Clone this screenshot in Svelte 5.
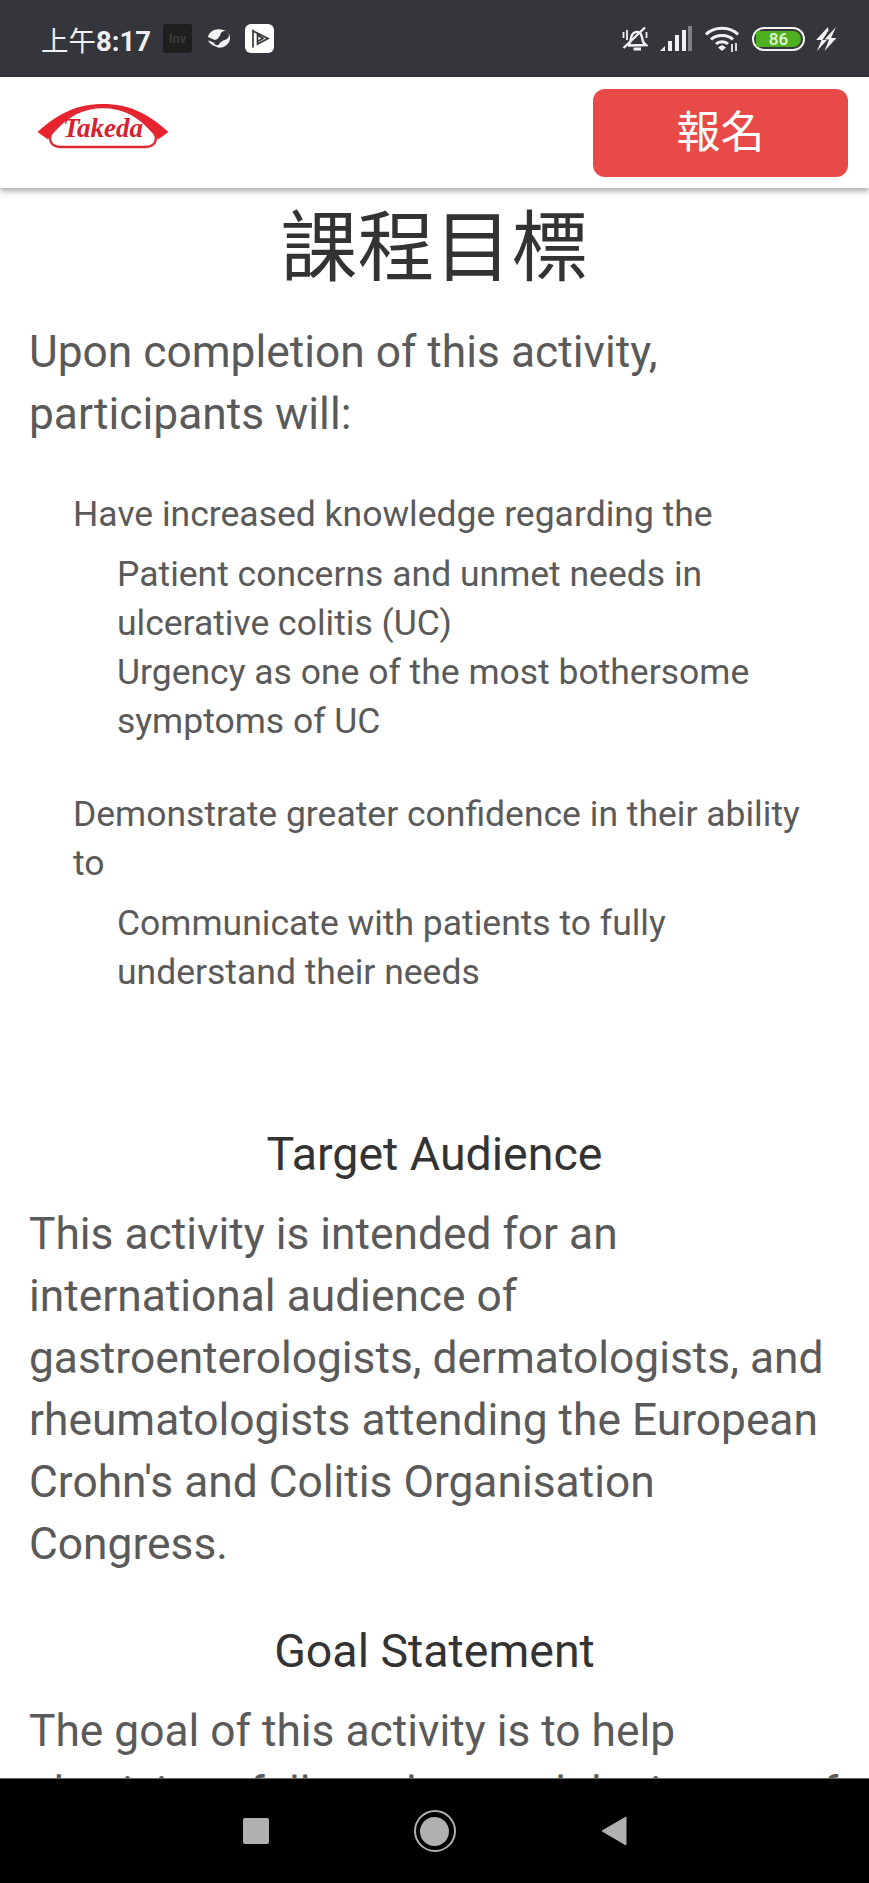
<script>
  const groups = [
    {
      lead: 'Have increased knowledge regarding the',
      items: ['Patient concerns and unmet needs in ulcerative colitis (UC)', 'Urgency as one of the most bothersome symptoms of UC']
    },
    {
      lead: 'Demonstrate greater confidence in their ability to',
      items: ['Communicate with patients to fully understand their needs']
    }
  ];
</script>

<div class="phone">
  <div class="status">
    <div class="left">
      <span class="time">上午<b>8:17</b></span>
      <span class="inv">Inv</span>
      <svg class="steam" width="24" height="21" viewBox="0 0 26 22">
        <path d="M13 1C6.500 1 2 4.600 1 9.500L8.500 12.500C9.300 12 10.200 11.700 11.200 11.800L14.300 7.500C14.500 4.500 17 2.600 19.700 3C22.300 3.400 24 5.700 23.700 8.300C23.300 11 21 12.700 18.500 12.500L14 15.600C13.600 17.400 12 18.500 10.300 18.200C8.900 18 7.900 17 7.600 15.700L1.300 13C2 16 5 18.300 9 19.500C10 20 12 21 13 21C20 21 25 16 25 10.500C25 5 20 1 13 1Z" fill="#f4f4f4"/>
        <circle cx="19" cy="7.800" r="2.800" fill="none" stroke="#35363b" stroke-width="1.200"/>
      </svg>
      <svg class="play" width="29" height="29" viewBox="0 0 29 29">
        <rect width="29" height="29" rx="6" fill="#fff"/>
        <path d="M8 5.500V23.500M8 7L23 14.500L12.500 20V11L18 14.500L12.500 17.500" fill="none" stroke="#36373b" stroke-width="1.700"/>
      </svg>
    </div>
    <div class="right">
      <svg class="bell" width="26" height="25" viewBox="0 0 26 25">
        <path d="M7 18.500C9 16 8.500 12 10 9C11.500 6 15 5 18 7C20.500 9 20 13 21 15.500C21.500 17 23 18 24 19L7 19.500Z" fill="none" stroke="#f2f2f2" stroke-width="2.400"/>
        <path d="M11.500 23H19" stroke="#f2f2f2" stroke-width="3"/>
        <path d="M1.500 22L23 1.500" stroke="#f2f2f2" stroke-width="2.400"/>
        <path d="M1.500 6V12M5 4V14M24.500 6V12" stroke="#f2f2f2" stroke-width="1.800"/>
      </svg>
      <svg class="signal" width="32" height="25" viewBox="0 0 32 25">
        <path d="M0 25H5V20Z" fill="#f2f2f2"/>
        <rect x="8" y="15" width="4" height="10" fill="#f2f2f2"/>
        <rect x="15" y="9" width="4" height="16" fill="#f2f2f2"/>
        <rect x="22" y="4" width="4" height="21" fill="#f2f2f2"/>
        <rect x="28" y="0" width="4" height="25" fill="#7f8083"/>
      </svg>
      <svg class="wifi" width="35" height="26" viewBox="0 0 35 26">
        <path d="M1 8.500C9 0 25 0 33 8.500M6 13.500C11 8 23 8 28 13.500M11 18C14 15 20 15 23 18" fill="none" stroke="#f2f2f2" stroke-width="3"/>
        <path d="M13 21.500L17 19L21 21.500L17 25Z" fill="#f2f2f2"/>
        <path d="M27 18V26M31 17V25" stroke="#d9d9d9" stroke-width="2"/>
      </svg>
      <div class="battery"><span>86</span></div>
      <svg class="bolt" width="22" height="24" viewBox="0 0 22 24">
        <path d="M13 0L1 13H6.500L2 24L12 13H7.500L13.500 3.500ZM21 0L9.500 12.500H14L9.500 24L21.500 11H16Z" fill="#f2f2f2"/>
      </svg>
    </div>
  </div>

  <header class="bar">
    <svg class="logo" width="132" height="46" viewBox="0 0 132 46">
      <path d="M0.500 29C22 10 40 1 66 1C92 1 110 10 131.500 29L121 36.500C103 14 86 4.500 66 4.500C46 4.500 29 14 11 36.500Z" fill="#e8232e"/>
      <path d="M16 27C31 11 47 4 66 4C85 4 101 11 116 27C122 37 118 44 108 44H24C14 44 10 37 16 27Z" fill="none" stroke="#df2a36" stroke-width="2.400"/>
      <text x="66" y="34" text-anchor="middle" class="logotext">Takeda</text>
    </svg>
    <button class="signup">報名</button>
  </header>

  <main class="content">
    <h1>課程目標</h1>
    <p class="intro">Upon completion of this activity, participants will:</p>
    <div class="objectives">
      {#each groups as g}
        <div class="group">
          <div class="lead">{g.lead}</div>
          <div class="items">
            {#each g.items as it}<div>{it}</div>{/each}
          </div>
        </div>
      {/each}
    </div>
    <h2>Target Audience</h2>
    <p>This activity is intended for an international audience of gastroenterologists, dermatologists, and rheumatologists attending the European Crohn's and Colitis Organisation Congress.</p>
    <h2 class="next">Goal Statement</h2>
    <p>The goal of this activity is to help physicians fully understand the impact of urgency on patients.</p>
  </main>

  <nav class="nav">
    <span class="square"></span>
    <span class="home"><span></span></span>
    <svg width="26" height="30" viewBox="0 0 26 30"><path d="M25 1V29L1 15Z" fill="#b0b0b0" stroke="#b0b0b0" stroke-linejoin="round"/></svg>
  </nav>
</div>

<style>
  :global(body) { margin: 0; background: #fff; }
  .phone {
    width: 869px; height: 1883px; display: flex; flex-direction: column; overflow: hidden;
    font-family: Roboto, "Noto Sans CJK TC", sans-serif;
  }
  .status {
    height: 77px; flex: none; background: #35363b; color: #f0f0f0;
    display: flex; justify-content: space-between; align-items: center;
    padding: 0 32px 0 41px; box-sizing: border-box;
  }
  .left, .right { display: flex; align-items: center; }
  .time { font-size: 27.500px; width: 122px; white-space: nowrap; }
  .time b { font-weight: 700; }
  .inv {
    width: 29px; height: 29px; border-radius: 3px; background: #1e1e1f; color: #3b3b3d;
    font-size: 13px; font-weight: 700; display: flex; align-items: center; justify-content: center;
  }
  .steam { margin-left: 15px; }
  .play { margin-left: 14px; }
  .signal { margin-left: 12px; }
  .wifi { margin-left: 13px; }
  .battery {
    width: 53px; height: 24px; box-sizing: border-box; border: 2.500px solid #f2f2f2; border-radius: 12px;
    padding: 2px; margin-left: 12px; display: flex;
  }
  .battery span {
    flex: 1; background: #4cb01f; border-radius: 2px 8px 8px 2px; color: #e8f5d8;
    font-size: 17px; font-weight: 500; text-align: center; line-height: 16px;
  }
  .bolt { margin-left: 10px; }
  .bar {
    height: 111px; flex: none; background: #fff; position: relative; z-index: 1;
    display: flex; justify-content: space-between; align-items: center;
    padding: 0 21px 0 37px; box-sizing: border-box;
    box-shadow: 0 3px 6px rgba(0, 0, 0, 0.35);
  }
  .logo { margin-bottom: 14px; }
  .logotext { font-family: "Liberation Serif", serif; font-style: italic; font-weight: 700; font-size: 27px; fill: #d8202f; }
  .signup {
    width: 255px; height: 88px; border: 0; border-radius: 12px; background: #e84a47; color: #fff;
    font-family: inherit; font-size: 44px; padding: 0 0 8px; margin-top: 1px;
  }
  .content { flex: 1; min-height: 0; overflow: hidden; padding: 0 29px; color: #5a5a5a; }
  h1 { margin: 13px 0 0; font-size: 77px; font-weight: 400; line-height: 96px; text-align: center; color: #333; }
  h2 { margin: 0; font-size: 46.500px; font-weight: 400; line-height: 62px; text-align: center; color: #333; }
  h2.next { margin-top: 45px; }
  p { margin: 18px 0 0; font-size: 44.300px; line-height: 62px; }
  p.intro { margin-top: 24px; }
  .objectives { padding: 45px 16px 0 44px; font-size: 35.500px; line-height: 49px; margin-bottom: 126px; }
  .group + .group { margin-top: 44px; }
  .items { padding: 11px 0 0 44px; }
  .nav {
    height: 105px; flex: none; background: #000; border-top: 1px solid #666; box-sizing: border-box;
    position: relative; display: flex; align-items: center; justify-content: center; gap: 145px;
  }
  .square { width: 26px; height: 26px; border-radius: 2px; background: #b0b0b0; }
  .home {
    width: 38px; height: 38px; border: 2px solid #b0b0b0; border-radius: 50%; display: flex;
    align-items: center; justify-content: center;
  }
  .home span { width: 29px; height: 29px; border-radius: 50%; background: #b0b0b0; }
</style>
